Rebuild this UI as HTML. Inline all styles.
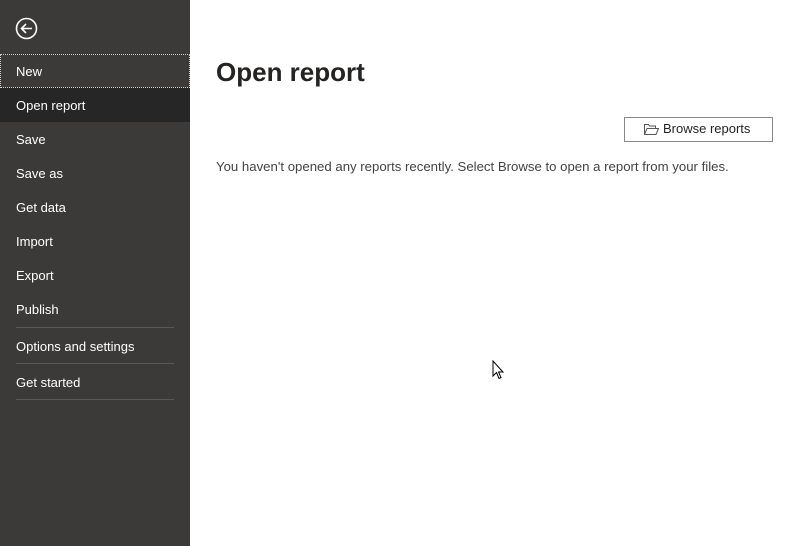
<!DOCTYPE html><html><head><style>
body{margin:0;width:800px;height:546px;overflow:hidden;font-family:"Segoe UI","Liberation Sans",sans-serif;background:#fff;position:relative}
#sb{position:absolute;left:0;top:0;width:190px;height:546px;background:#3b3a39}
.it{position:absolute;left:0;width:190px;height:34px;line-height:36px;color:#fff;font-size:13px;padding-left:16px;box-sizing:border-box}
.sep{position:absolute;left:16px;width:158px;height:1px;background:#5a5958}
</style></head><body>
<div id="sb">
<svg style="position:absolute;left:15px;top:17px" width="23" height="23" viewBox="0 0 23 23"><circle cx="11.5" cy="11.5" r="10" fill="none" stroke="#fff" stroke-width="1.6"/><path d="M17 11.5H6.5M11 7l-4.5 4.5L11 16" fill="none" stroke="#fff" stroke-width="1.6"/></svg>
<div class="it" style="top:54px;outline:1px dotted #ccc;outline-offset:-1px">New</div>
<div class="it" style="top:88px;background:#262626">Open report</div>
<div class="it" style="top:122px">Save</div>
<div class="it" style="top:156px">Save as</div>
<div class="it" style="top:190px">Get data</div>
<div class="it" style="top:224px">Import</div>
<div class="it" style="top:258px">Export</div>
<div class="it" style="top:292px">Publish</div>
<div class="sep" style="top:327px"></div>
<div class="it" style="top:329px">Options and settings</div>
<div class="sep" style="top:363px"></div>
<div class="it" style="top:365px">Get started</div>
<div class="sep" style="top:399px"></div>
</div>
<div style="position:absolute;left:216px;top:57px;font-size:26px;font-weight:600;color:#252423">Open report</div>
<div style="position:absolute;left:624px;top:117px;width:147px;height:23px;border:1px solid #8a8886;box-sizing:content-box;font-size:13px;color:#252423;line-height:22px">
<svg style="position:absolute;left:19px;top:6px" width="15" height="11" viewBox="0 0 15 11"><path d="M0.5 10.5V0.5h4l1 1.5h6v2M0.5 10.5l2.5-6h11.5l-2.5 6z" fill="none" stroke="#555" stroke-width="1"/></svg>
<span style="position:absolute;left:38px">Browse reports</span></div>
<div style="position:absolute;left:216px;top:159px;font-size:13.2px;color:#444">You haven't opened any reports recently. Select Browse to open a report from your files.</div>
<svg style="position:absolute;left:492px;top:360px" width="14" height="20" viewBox="0 0 14 20"><path d="M1 1v15l3.5-3.5 2.5 6 2-1-2.5-5.5H11z" fill="#fff" stroke="#000" stroke-width="1"/></svg>
</body></html>
